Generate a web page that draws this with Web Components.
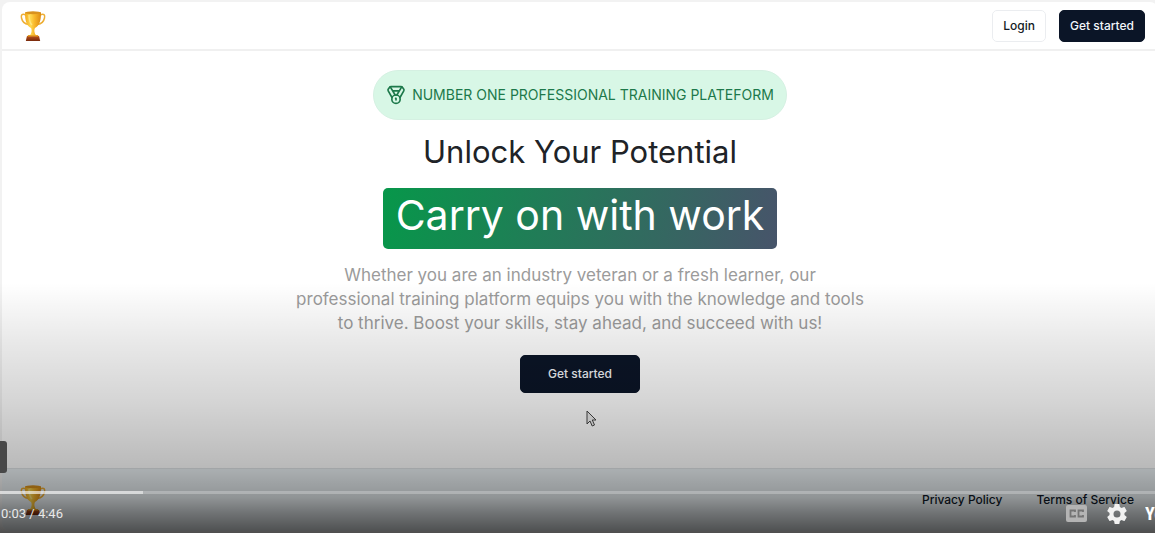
<!DOCTYPE html>
<html lang="en">
<head>
<meta charset="utf-8">
<title>Training platform</title>
<style>
html, body { margin: 0; height: 100%; }
body { font-family: Inter, "Liberation Sans", sans-serif; background: #f2f2f2; overflow: hidden; }
</style>
</head>
<body>
<video-page></video-page>
<script>
const define = (name, html) => {
  const template = document.createElement('template');
  template.innerHTML = html;
  customElements.define(name, class extends HTMLElement {
    constructor() {
      super();
      this.attachShadow({ mode: 'open' }).append(template.content.cloneNode(true));
    }
  });
};

define('trophy-logo', `
<style>:host{display:block;width:26px;height:32px}svg{display:block;width:100%;height:100%}</style>
<svg viewBox="0 0 26 32" role="img" aria-label="Trophy">
  <defs>
    <linearGradient id="gold"><stop offset="0" stop-color="#f3a91c"/><stop offset=".35" stop-color="#ffd84f"/><stop offset=".6" stop-color="#f8b72a"/><stop offset="1" stop-color="#dc8a12"/></linearGradient>
    <linearGradient id="wood" x2="0" y2="1"><stop offset="0" stop-color="#b8521a"/><stop offset="1" stop-color="#78290c"/></linearGradient>
  </defs>
  <path d="M6 5C2 3 .8 5 1.5 8c.8 4 3.500 6 7 6.500M20 5c4-2 5.200 0 4.500 3-.8 4-3.500 6-7 6.500" fill="none" stroke="#edae35" stroke-width="1.500"/>
  <path d="M5 2.500C5 11 6.500 15.500 11 18c1 1.500 1 5-1.500 8h7c-2.500-3-2.500-6.500-1.500-8 4.500-2.500 6-7 6-15.500z" fill="url(#gold)"/>
  <ellipse cx="13" cy="2.700" rx="8" ry="1.500" fill="#d9921d"/>
  <path d="M9 5c0 5 1 8 3 10" fill="none" stroke="#fff0a0" stroke-opacity=".6" stroke-width="1.500"/>
  <path d="M7 26h12l1.200 5H5.800z" fill="url(#wood)"/>
  <path d="M8 25h10l.5 1.500h-11z" fill="#e7a126"/>
</svg>`);

define('medal-icon', `
<style>:host{display:block;width:20px;height:20px}svg{display:block;width:100%;height:100%}</style>
<svg viewBox="0 0 24 24" fill="none" stroke="currentColor" stroke-width="2" stroke-linecap="round" stroke-linejoin="round" aria-hidden="true">
  <path d="M7.210 15 2.660 7.140a2 2 0 0 1 .130-2.200L4.400 2.800A2 2 0 0 1 6 2h12a2 2 0 0 1 1.600.8l1.600 2.140a2 2 0 0 1 .140 2.200L16.790 15"/>
  <path d="M11 12 5.120 2.200M13 12l5.880-9.800M8 7h8"/><circle cx="12" cy="17" r="5"/><path d="M12 18v-2h-.5"/>
</svg>`);

define('ui-button', `
<style>
:host{display:block}
button{display:block;box-sizing:border-box;height:32px;padding:0 10px;border:1px solid #0b1527;border-radius:5px;background:#0b1527;color:#f3f6fa;font:500 12px/16px Inter,sans-serif;white-space:nowrap}
:host([outline]) button{background:#fff;color:#141a24;border-color:#ebedf0}
:host([large]) button{height:38px;width:120px}
</style>
<button type="button"><slot></slot></button>`);

define('site-header', `
<style>
:host{display:flex;align-items:center;justify-content:space-between;box-sizing:border-box;height:49px;padding:1px 13px 0 18px;border-bottom:2px solid #f0f0f0}
nav{display:flex;gap:13px}
</style>
<trophy-logo></trophy-logo>
<nav><ui-button outline>Login</ui-button><ui-button>Get started</ui-button></nav>`);

define('site-hero', `
<style>
:host{display:flex;flex-direction:column;align-items:center;padding-top:19px;text-align:center}
.badge{display:flex;align-items:center;box-sizing:border-box;height:50px;padding:0 12px;gap:6px;border:1px solid #d5f0e2;border-radius:25px;background:#d8f7e6;color:#1d794b;font-size:14px;line-height:20px}
h1{display:flex;flex-direction:column;align-items:center;margin:12px 0 0;font-weight:400;font-size:31px;line-height:40px;color:#202327}
.banner{margin-top:16px;box-sizing:border-box;height:61px;padding:0 13px;border-radius:5px;background:linear-gradient(100deg,#07974a,#47546a);color:#fff;font-size:41px;line-height:54px}
p{margin:14px 0 20px;max-width:572px;font-size:17px;line-height:24px;color:#9b9b9b}
</style>
<div class="badge"><medal-icon></medal-icon><span>NUMBER ONE PROFESSIONAL TRAINING PLATEFORM</span></div>
<h1><span>Unlock Your Potential</span><span class="banner">Carry on with work</span></h1>
<p>Whether you are an industry veteran or a fresh learner, our professional training platform equips you with the knowledge and tools to thrive. Boost your skills, stay ahead, and succeed with us!</p>
<ui-button large>Get started</ui-button>`);

define('site-footer', `
<style>
:host{display:flex;align-items:center;justify-content:space-between;box-sizing:border-box;height:63px;padding:0 24px 0 18px;border-top:1px solid #dfe3e6;background:#eaf0f3}
nav{display:flex;gap:34px}
a{color:#0f1827;text-decoration:none;font-size:12px;line-height:16px;font-weight:500}
</style>
<trophy-logo></trophy-logo>
<nav><a href="#privacy">Privacy Policy</a><a href="#terms">Terms of Service</a></nav>`);

define('player-controls', `
<style>
:host{position:absolute;inset:0;display:flex;flex-direction:column;justify-content:flex-end;overflow:hidden;color:#e8e8e8;font-family:Roboto,sans-serif;
background:linear-gradient(to top,rgba(0,0,0,.68) 0,rgba(0,0,0,.52) 20px,rgba(0,0,0,.38) 36px,rgba(0,0,0,.28) 62px,rgba(0,0,0,.17) 130px,rgba(0,0,0,.09) 190px,rgba(0,0,0,0) 250px)}
.tip{width:7px;height:32px;margin-bottom:18px;border-radius:0 3px 3px 0;background:#484848}
.track{height:3px;background:rgba(255,255,255,.25)}
.loaded{width:143px;height:3px;background:rgba(255,255,255,.5)}
.bar{display:flex;align-items:center;justify-content:space-between;height:39px}
time{font-size:13px;line-height:16px;margin-left:1px}
.right{display:flex;align-items:center;height:39px}
button{display:block;padding:0;border:0;background:none;color:#eee}
svg{display:block}
.cc{margin-right:20px}.gear{margin-right:18px}
.brand{width:10px;overflow:hidden;white-space:nowrap;color:#fff;text-decoration:none;font:700 18px/22px "Liberation Sans Narrow","Roboto Condensed",Roboto,sans-serif}
</style>
<div class="tip"></div>
<div class="track"><div class="loaded"></div></div>
<div class="bar"><time>0:03 / 4:46</time>
<div class="right">
<button class="cc" type="button" aria-label="Subtitles"><svg width="21" height="17" viewBox="0 0 21 17"><rect width="21" height="17" rx="2" fill="#b4b4b4"/><path d="M9 7V5.500H4.500v6H9V10M17 7V5.500h-4.500v6H17V10" fill="none" stroke="#747474" stroke-width="1.800"/></svg></button>
<button class="gear" type="button" aria-label="Settings"><svg width="20" height="20" viewBox="2 2 20 20"><path fill="#f1f1f1" d="M19.430 12.980c.040-.320.070-.640.070-.980s-.030-.660-.070-.980l2.110-1.650c.190-.150.240-.420.120-.640l-2-3.460c-.120-.220-.390-.300-.610-.220l-2.490 1c-.520-.400-1.080-.730-1.690-.980l-.380-2.650A.488.488 0 0 0 14 2h-4c-.250 0-.460.180-.490.420l-.380 2.650c-.610.250-1.170.590-1.690.980l-2.490-1c-.230-.090-.490 0-.610.220l-2 3.460c-.130.220-.070.490.120.640l2.110 1.650c-.040.320-.070.650-.070.980s.030.660.070.980l-2.110 1.650c-.190.150-.240.420-.120.640l2 3.460c.120.220.390.300.610.220l2.490-1c.520.400 1.080.730 1.690.980l.380 2.650c.030.240.240.420.490.420h4c.250 0 .460-.180.490-.420l.380-2.650c.610-.250 1.170-.590 1.690-.980l2.490 1c.230.090.490 0 .610-.220l2-3.460c.120-.220.070-.490-.120-.640zM12 15.500a3.500 3.500 0 1 1 0-7 3.500 3.500 0 0 1 0 7z"/></svg></button>
<a class="brand" href="#youtube">YouTube</a>
</div></div>`);

define('mouse-pointer', `
<style>:host{display:block;width:12px;height:18px}svg{display:block}</style>
<svg width="12" height="18" viewBox="0 0 12 18" aria-hidden="true"><path d="M1 1v13l3-3 2.200 5 2.300-1-2.200-5H10z" fill="#eee" stroke="#444" stroke-width="1"/></svg>`);

define('video-page', `
<style>
:host{position:relative;display:flex;height:100%;box-sizing:border-box;padding:2px 0 2px 2px;overflow:hidden}
.frame{display:flex;flex-direction:column;flex:1;margin-right:-3px;border-radius:8px;overflow:hidden;background:#fff}
main{flex:1}
mouse-pointer{position:absolute;left:calc(50% + 8px);top:410px}
</style>
<div class="frame"><site-header></site-header><main><site-hero></site-hero></main><site-footer></site-footer></div>
<mouse-pointer></mouse-pointer>
<player-controls></player-controls>`);
</script>
</body>
</html>
